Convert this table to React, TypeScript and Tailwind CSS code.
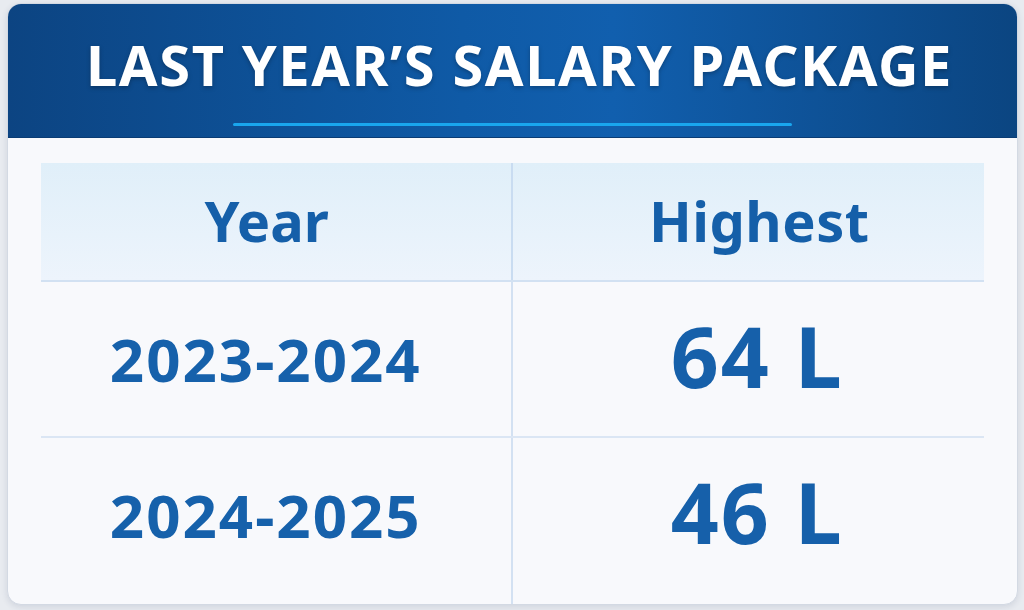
const rows = [
  { year: "2023-2024", highest: "64 L" },
  { year: "2024-2025", highest: "46 L" },
];

export default function App() {
  return (
    <div
      className="w-[1024px] h-[610px] bg-[#e8ebf0] pt-[3px] pl-[7px] pr-[6px] pb-[5px]"
      style={{ fontFamily: '"Noto Sans", "Open Sans", sans-serif' }}
    >
      <div className="h-full rounded-[14px] overflow-hidden border border-[#d3d9e3] bg-[#f8f9fc] shadow-[0_2px_6px_rgba(30,50,90,0.12)] flex flex-col">
        {/* Title bar */}
        <div className="h-[134px] shrink-0 flex flex-col items-center bg-[linear-gradient(90deg,#0c4482_0%,#0f5aa6_45%,#115fae_60%,#0b4581_100%)] border-b border-[#0a3c74]">
          <h1 className="mt-[28px] pl-[14px] text-[56px] leading-[64px] font-bold text-white tracking-[1.6px] drop-shadow-[0_2px_2px_rgba(0,0,0,0.25)]">
            LAST YEAR’S SALARY PACKAGE
          </h1>
          <div className="mt-[27px] w-[559px] h-[3px] rounded-full bg-[#19a6ee]" />
        </div>

        {/* Table */}
        <div className="flex-1 px-[33px] pt-[25px] flex flex-col">
          <div className="grid grid-cols-2 h-[119px] bg-[linear-gradient(180deg,#e0eff9_0%,#edf4fc_100%)] border-b-2 border-[#d2e1f2]">
            <div className="flex items-center justify-center border-r-2 border-[#c9dcf1] text-[56px] font-bold text-[#155fa9] pb-[4px] pr-[18px]">
              Year
            </div>
            <div className="flex items-center justify-center text-[56px] font-bold text-[#155fa9] pb-[4px] pl-[22px] tracking-[0.5px]">
              Highest
            </div>
          </div>
          {rows.map((row, i) => (
            <div
              key={row.year}
              className={`grid grid-cols-2 ${i === 0 ? "h-[156px] border-b-2 border-[#dbe6f4]" : "flex-1"}`}
            >
              <div
                className={`flex items-center justify-center border-r-2 border-[#d3e1f2] text-[60px] font-bold text-[#1661ab] tracking-[2px] pr-[20px] ${i === 0 ? "" : "pb-[12px]"}`}
              >
                {row.year}
              </div>
              <div
                className={`flex items-center justify-center text-[84px] font-bold text-[#1660aa] tracking-[2px] pl-[18px] ${i === 0 ? "pb-[6px]" : "pb-[18px]"}`}
              >
                {row.highest}
              </div>
            </div>
          ))}
        </div>
      </div>
    </div>
  );
}
